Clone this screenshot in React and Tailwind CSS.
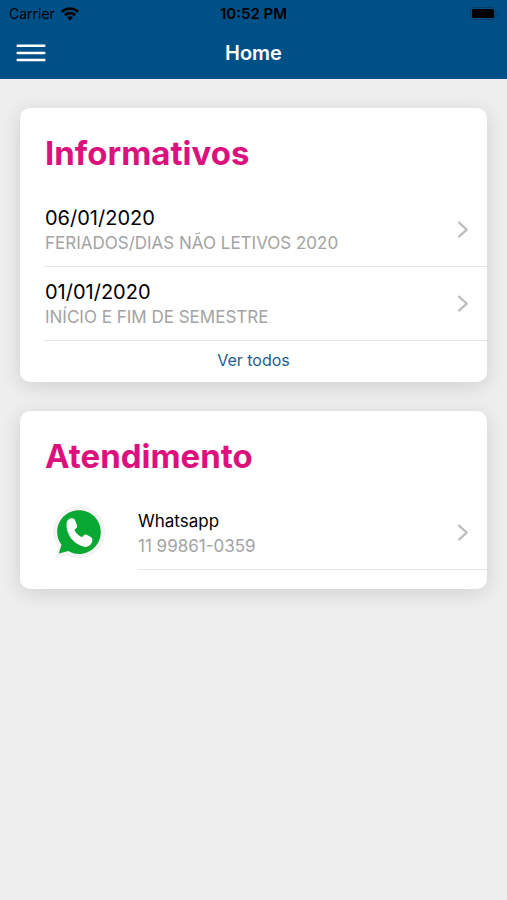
import React from "react";
import clsx from "clsx";

const NEWS = [
  { date: "06/01/2020", title: "FERIADOS/DIAS NÃO LETIVOS 2020" },
  { date: "01/01/2020", title: "INÍCIO E FIM DE SEMESTRE" },
];

function WifiIcon() {
  return (
    <svg viewBox="0 0 18 14" className="h-[14px] w-[18px]" aria-hidden="true">
      <g fill="none" stroke="#000" strokeWidth="2.6">
        <path d="M0.9 4.9C5.4 0.4 12.6 0.4 17.1 4.9"/>
        <path d="M3.9 8.2C6.8 5.4 11.2 5.4 14.1 8.2"/>
      </g>
      <path d="M9 13.4L6 10.4C7.6 9 10.4 9 12 10.4Z" fill="#000"/>
    </svg>
  );
}

function BatteryIcon() {
  return (
    <svg viewBox="0 0 29 14" className="h-[14px] w-[29px]" aria-hidden="true">
      <rect x="0.5" y="0.5" width="25" height="12" rx="3" fill="none" stroke="#003d6b"/>
      <rect x="2" y="2" width="22" height="9" rx="1.5" fill="#000"/>
      <path d="M27 4.5C28.8 5.2 28.8 7.8 27 8.5Z" fill="#003d6b"/>
    </svg>
  );
}

function MenuIcon() {
  return (
    <svg viewBox="0 0 30 20" className="h-5 w-[30px]" aria-hidden="true">
      <path d="M1.7 2.8H28.3M1.7 9.9H28.3M1.7 17.1H28.3" stroke="#fff" strokeWidth="2.5" strokeLinecap="round"/>
    </svg>
  );
}

function Chevron() {
  return (
    <svg viewBox="0 0 12 18" className="h-[18px] w-3 shrink-0" aria-hidden="true">
      <path d="M2 1.6L9.8 8.6L2 15.6" fill="none" stroke="#bdbdbf" strokeWidth="2.2" strokeLinecap="round" strokeLinejoin="round"/>
    </svg>
  );
}

function WhatsappLogo() {
  return (
    <svg viewBox="0 0 56 56" className="size-14 shrink-0" aria-hidden="true">
      <path d="M28 1C42.6 1 54 12.4 54 27S42.6 53.2 28 53.2C23.6 53.2 19.6 52.1 16 50.2L3.6 54L7.2 41.8C4.2 37.7 2 32.6 2 27C2 12.4 13.4 1 28 1Z" fill="#f3f3f3"/>
      <path d="M28 5.2C40.2 5.2 49.8 14.9 49.8 27S40.2 49 28 49C24.1 49 20.5 48 17.4 46.1L7.8 48.4L10.5 39.8C7.8 36.3 6.2 31.8 6.2 27C6.2 14.9 15.8 5.2 28 5.2Z" fill="#08a832"/>
      <path d="M15.5 19.2C15.6 16.3 17.4 13.4 20 13.3C22.5 13 23.6 13.8 24.3 16L25.9 19.7C26.5 21.4 26.1 22.2 25.2 23.1L24 24.4C23.5 25 23.6 25.5 24 26.2C25.6 28.7 27.6 30.5 30.2 31.7C31 32.1 31.4 31.9 32 31.3L33.1 30.1C34 29.2 34.9 29.3 36.1 29.9L39.8 32.1C41.1 32.9 41.5 33.8 41.3 35.6C40.8 39.6 37.8 42.1 34.2 41.9C30.4 41.6 25.3 39 21.3 34.7C17.6 30.7 15.3 24.4 15.5 19.2Z" fill="#fff"/>
    </svg>
  );
}

function Card({ title, className, children }) {
  return (
    <section className={clsx("overflow-hidden rounded-[10px] bg-white shadow-[0_4px_20px_rgba(0,0,0,0.13)]", className)}>
      <h2 className="px-[25px] pt-[25px] pb-5 text-[33px] leading-10 font-bold text-[#db117d]">{title}</h2>
      {children}
    </section>
  );
}

export default function App() {
  return (
    <div className="min-h-screen bg-[#eeeeee] font-['Inter','Liberation_Sans',sans-serif] text-black">
      <header className="bg-[#005088]">
        <div className="grid h-7 grid-cols-3 items-center px-2 text-sm">
          <div className="flex items-center gap-1.5 pl-px">
            <span>Carrier</span>
            <WifiIcon/>
          </div>
          <span className="text-center text-[15px] font-semibold">10:52 PM</span>
          <div className="flex justify-end"><BatteryIcon/></div>
        </div>
        <div className="grid h-[51px] grid-cols-3 items-center px-4 pb-0.5">
          <button type="button" aria-label="Menu" className="justify-self-start"><MenuIcon/></button>
          <h1 className="text-center text-xl font-semibold text-white">Home</h1>
        </div>
      </header>

      <main className="flex flex-col gap-[29px] px-5 py-[29px]">
        <Card title="Informativos">
          <ul className="pl-6">
            {NEWS.map(item => (
              <li key={item.date} className="border-b border-[#e6e6e6]">
                <a href="#" className="flex items-center justify-between pt-3 pr-[18px] pb-[11px] pl-px">
                  <div>
                    <p className="text-xl leading-[26px]">{item.date}</p>
                    <p className="text-[17px] leading-6 text-[#a3a3a3]">{item.title}</p>
                  </div>
                  <Chevron/>
                </a>
              </li>
            ))}
          </ul>
          <a href="#" className="block pt-[9px] pb-3 text-center text-base leading-5 text-[#1b5f92]">Ver todos</a>
        </Card>

        <Card title="Atendimento" className="pb-[19px]">
          <a href="#" className="flex items-center pl-[31px]">
            <WhatsappLogo/>
            <div className="ml-[31px] flex flex-1 items-center justify-between border-b border-[#e6e6e6] pt-3 pr-[18px] pb-[11px]">
              <div>
                <p className="text-[17px] leading-[26px]">Whatsapp</p>
                <p className="text-[17px] leading-6 text-[#a3a3a3]">11 99861-0359</p>
              </div>
              <Chevron/>
            </div>
          </a>
        </Card>
      </main>
    </div>
  );
}
